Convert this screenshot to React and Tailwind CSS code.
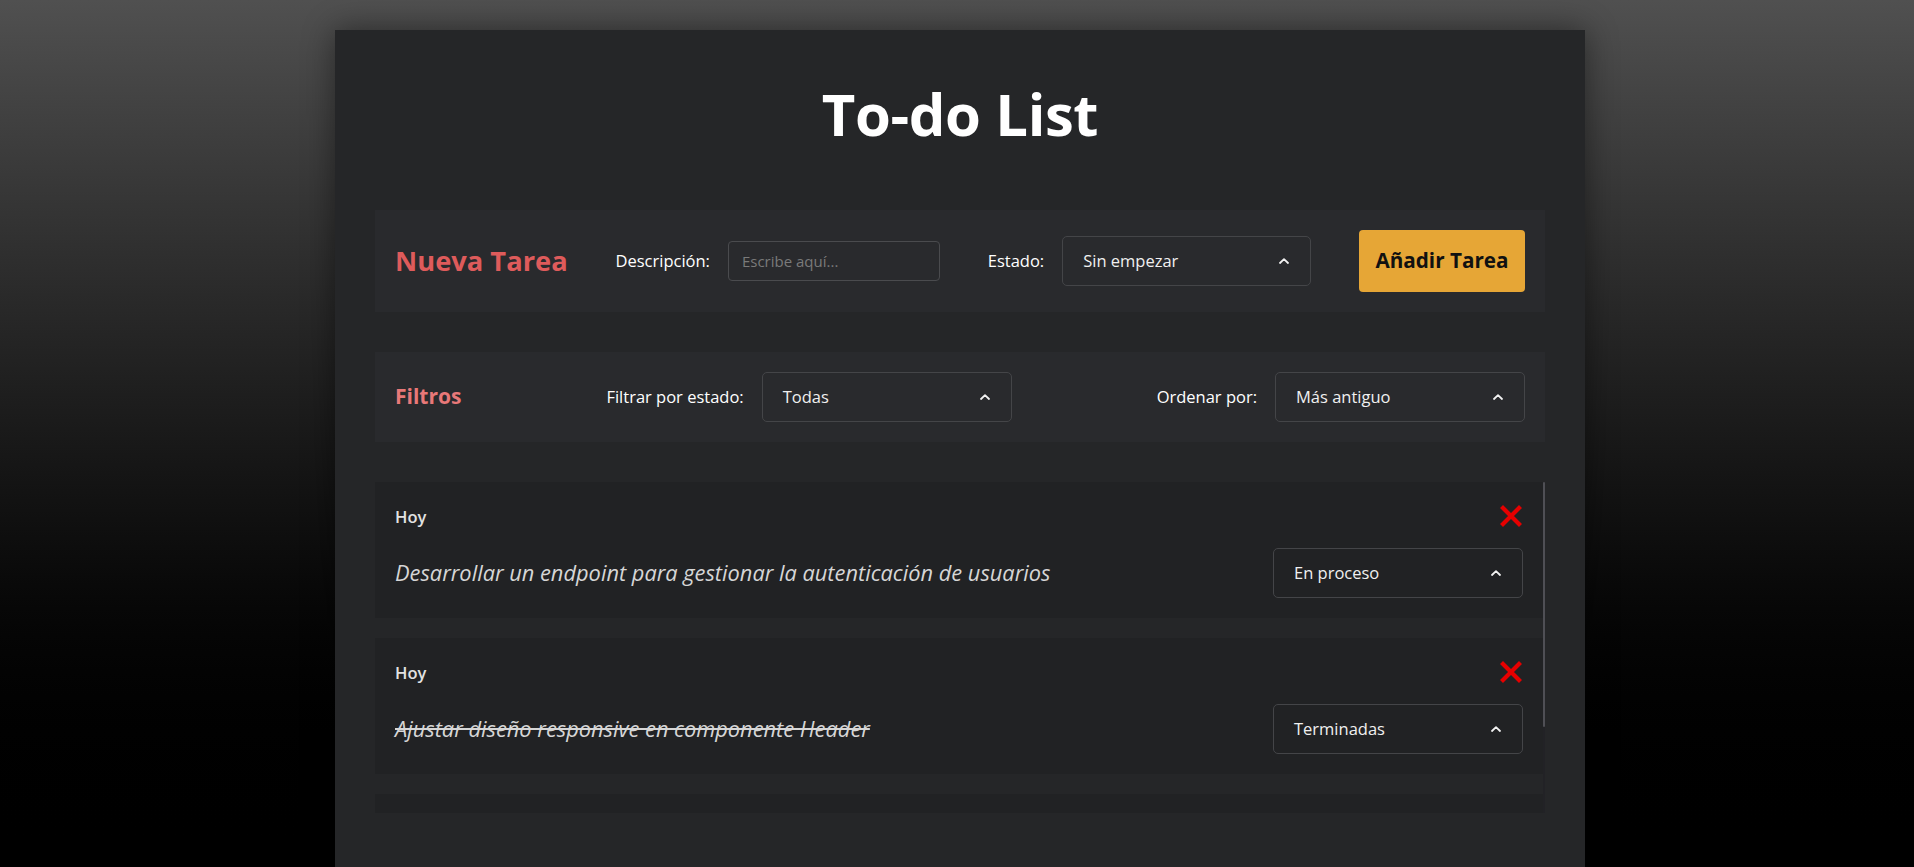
import { useState } from 'react'

const FONT = { fontFamily: '"Open Sans", "Noto Sans", sans-serif' }

function Chevron() {
  return (
    <svg width="10" height="6" viewBox="0 0 10 6" fill="none" className="shrink-0">
      <polyline points="1,5 5,1.2 9,5" stroke="#f2f2f2" strokeWidth="1.8" strokeLinecap="round" strokeLinejoin="round" />
    </svg>
  )
}

function FakeSelect({ value, width = 'w-[250px]' }) {
  return (
    <div className={`${width} h-[50px] flex items-center justify-between pl-[20px] pr-[21px] border border-[#444548] rounded-[5px] text-[16.5px] text-[#f0f0f0]`}>
      <span>{value}</span>
      <Chevron />
    </div>
  )
}

function CrossMark() {
  return (
    <svg width="22" height="22" viewBox="0 0 22 22">
      <path d="M3 3 L19 19 M19 3 L3 19" stroke="#e60000" strokeWidth="4.2" strokeLinecap="square" />
    </svg>
  )
}

function TaskItem({ task }) {
  return (
    <div className="shrink-0 bg-[#212224] h-[136px] px-5 pt-[22px] pb-5 flex flex-col gap-5">
      <div className="h-[24px] flex items-center justify-between">
        <span className="text-[16.5px] font-semibold text-[#e2e2e2] pt-[3px]">{task.date}</span>
        <button className="pr-[1px]"><CrossMark /></button>
      </div>
      <div className="h-[50px] flex items-center justify-between">
        <span className={`text-[21.8px] italic text-[#d6d6d6] ${task.done ? 'line-through' : ''}`}>
          {task.text}
        </span>
        <FakeSelect value={task.status} />
      </div>
    </div>
  )
}

export default function App() {
  const [tasks] = useState([
    { id: 1, date: 'Hoy', text: 'Desarrollar un endpoint para gestionar la autenticación de usuarios', status: 'En proceso', done: false },
    { id: 2, date: 'Hoy', text: 'Ajustar diseño responsive en componente Header', status: 'Terminadas', done: true },
  ])

  return (
    <div className="h-[867px] overflow-hidden bg-linear-to-b from-[#505050] to-black pt-[30px]" style={FONT}>
      {/* Panel principal */}
      <div className="ml-[335px] w-[1250px] min-h-[900px] bg-[#252628] px-10 pt-[54px] shadow-[0_0_30px_rgba(0,0,0,0.45)]">
        <h1 className="text-center text-[58px] leading-[60px] font-bold text-white tracking-[-0.4px]">To-do List</h1>

        {/* Nueva tarea */}
        <div className="mt-[66px] h-[102px] bg-[#292a2d] px-5 flex items-center justify-between">
          <h2 className="text-[27.3px] font-bold text-[#de5b5b]">Nueva Tarea</h2>
          <div className="flex items-center gap-[18px]">
            <label className="text-[16.5px] text-white">Descripción:</label>
            <input
              placeholder="Escribe aquí..."
              className="w-[212px] h-[40px] px-[13px] bg-transparent border border-[#4a4b4e] rounded-[4px] text-[15px] text-white placeholder:text-[#7a7a7a] outline-none"
            />
          </div>
          <div className="flex items-center gap-[18px]">
            <label className="text-[16.5px] text-white">Estado:</label>
            <FakeSelect value="Sin empezar" width="w-[249px]" />
          </div>
          <button className="w-[166px] h-[62px] bg-[#e6a636] rounded-[4px] text-[20.7px] font-bold text-[#111]">
            Añadir Tarea
          </button>
        </div>

        {/* Filtros */}
        <div className="mt-10 h-[90px] bg-[#292a2d] px-5 flex items-center justify-between">
          <h2 className="text-[21px] font-bold text-[#e87878]">Filtros</h2>
          <div className="flex items-center gap-[18px]">
            <label className="text-[16.5px] text-white">Filtrar por estado:</label>
            <FakeSelect value="Todas" />
          </div>
          <div className="flex items-center gap-[18px]">
            <label className="text-[16.5px] text-white">Ordenar por:</label>
            <FakeSelect value="Más antiguo" />
          </div>
        </div>

        {/* Lista de tareas */}
        <div className="mt-10 h-[331px] flex">
          <div className="flex-1 flex flex-col gap-5 overflow-hidden">
            {tasks.map(t => (
              <TaskItem key={t.id} task={t} />
            ))}
            <div className="shrink-0 h-[136px] bg-[#212224]" />
          </div>
          <div className="w-[2px] bg-[#222226] flex flex-col">
            <div className="h-[245px] bg-[#4f4f55] rounded-full" />
          </div>
        </div>
      </div>
    </div>
  )
}
